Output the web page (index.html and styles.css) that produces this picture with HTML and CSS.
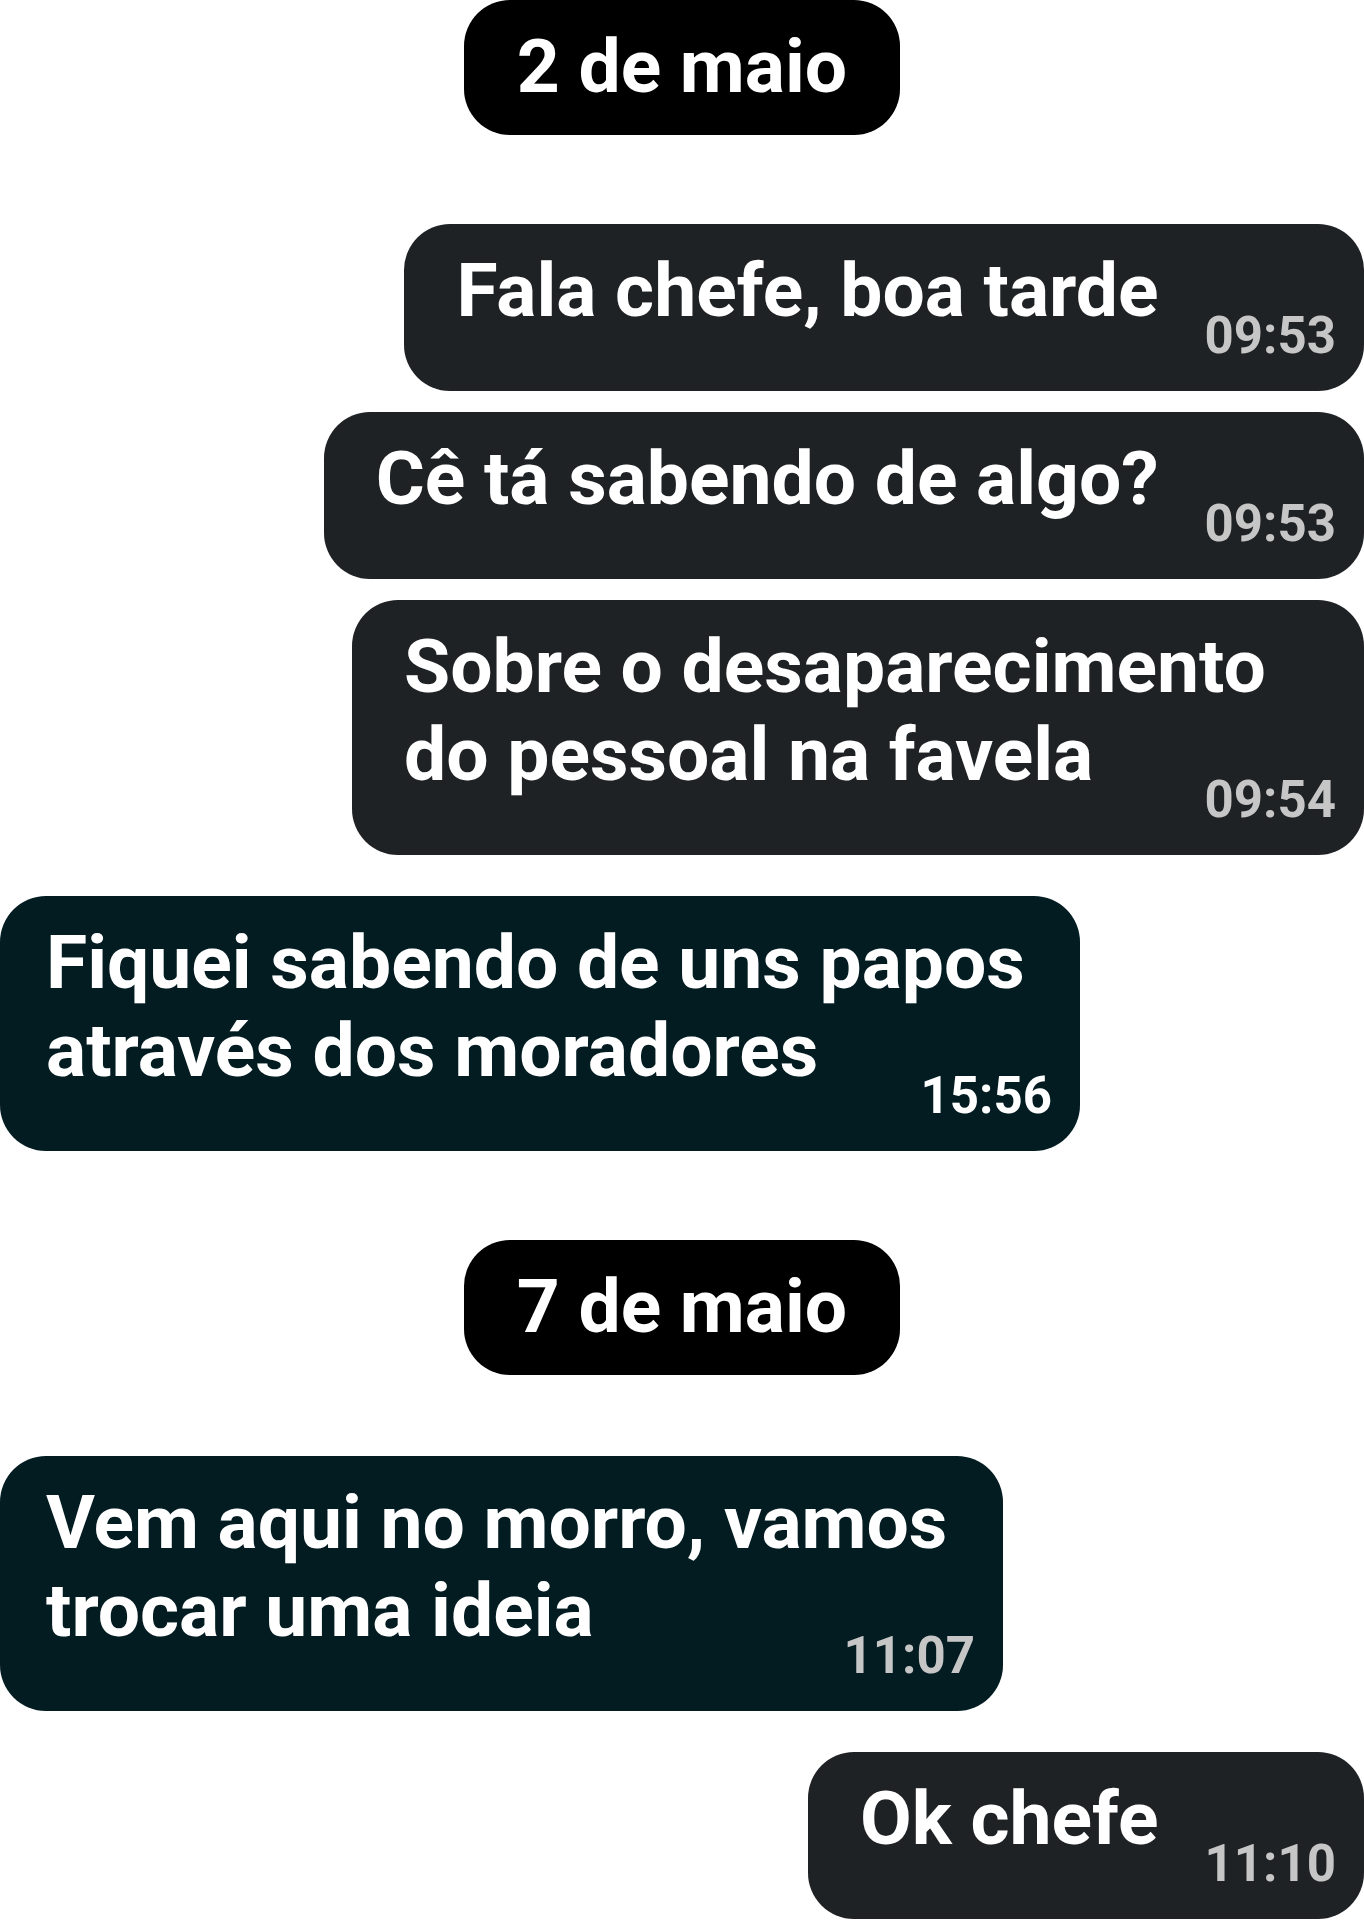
FILE: index.html
```html
<!DOCTYPE html>
<html lang="pt-BR">
<head>
<meta charset="utf-8">
<title>Conversa</title>
<link rel="stylesheet" href="styles.css">
</head>
<body>
<main class="chat">
  <section class="day day--first">
    <div class="date">2 de maio</div>
    <div class="group group--out">
      <div class="bubble bubble--out"><p class="text">Fala chefe, boa tarde<span class="time">09:53</span></p></div>
      <div class="bubble bubble--out"><p class="text">Cê tá sabendo de algo?<span class="time">09:53</span></p></div>
      <div class="bubble bubble--out bubble--wrap-a"><p class="text">Sobre o desaparecimento do pessoal na favela<span class="time">09:54</span></p></div>
    </div>
    <div class="group group--in">
      <div class="bubble bubble--in bubble--wrap-b"><p class="text">Fiquei sabendo de uns papos através dos moradores<span class="time time--bright">15:56</span></p></div>
    </div>
  </section>
  <section class="day">
    <div class="date">7 de maio</div>
    <div class="group group--in">
      <div class="bubble bubble--in bubble--wrap-c"><p class="text">Vem aqui no morro, vamos trocar uma ideia<span class="time">11:07</span></p></div>
    </div>
    <div class="group group--out">
      <div class="bubble bubble--out"><p class="text">Ok chefe<span class="time">11:10</span></p></div>
    </div>
  </section>
</main>
</body>
</html>
```
FILE: styles.css
```css
* { box-sizing: border-box; }

html, body {
  margin: 0;
  padding: 0;
  background: #ffffff;
}

body {
  font-family: Roboto, "Liberation Sans", Arial, sans-serif;
  font-weight: 700;
  color: #ffffff;
}

.chat {
  display: flex;
  flex-direction: column;
  gap: 89px;
}

.day {
  display: flex;
  flex-direction: column;
  gap: 41px;
}

.date {
  align-self: center;
  background: #000000;
  color: #ffffff;
  border-radius: 46px;
  padding: 22px 53px 25px;
  font-size: 75px;
  line-height: 88px;
  margin-bottom: 40px;
}

.day--first .date {
  margin-bottom: 48px;
}

.group {
  display: flex;
  flex-direction: column;
  gap: 21px;
}

.group--out { align-items: flex-end; }
.group--in { align-items: flex-start; }

.bubble {
  border-radius: 46px;
  padding: 22px 28px 30px 52px;
  font-size: 75px;
  line-height: 88px;
}

.bubble--out { background: #1f2224; }

.bubble--in {
  background: #031c22;
  padding-left: 46px;
}

.bubble--wrap-a { max-width: 1012px; }
.bubble--wrap-b { max-width: 1080px; }
.bubble--wrap-c { max-width: 1003px; }

.text {
  margin: 0;
}

.time {
  float: right;
  margin: 64px 0 0 46px;
  font-size: 51px;
  line-height: 51px;
  color: #c6c6c6;
}

.time--bright { color: #ffffff; }
```
